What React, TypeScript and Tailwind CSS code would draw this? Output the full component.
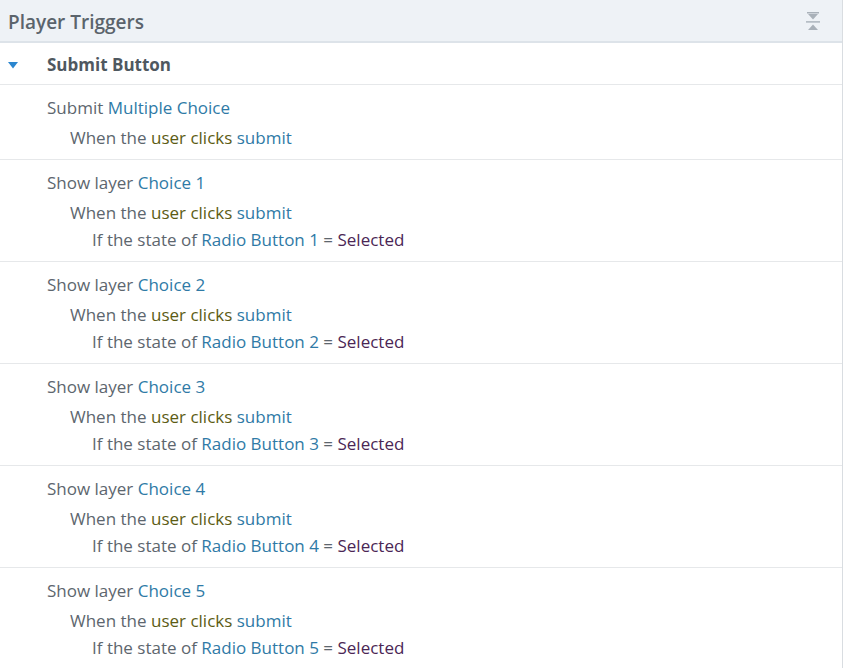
import React from "react";

const FONT = { fontFamily: '"Open Sans", "Noto Sans", sans-serif' };

type Trigger = {
  action: string;
  target: string;
  condition?: string;
};

const TRIGGERS: Trigger[] = [
  { action: "Submit", target: "Multiple Choice" },
  { action: "Show layer", target: "Choice 1", condition: "Radio Button 1" },
  { action: "Show layer", target: "Choice 2", condition: "Radio Button 2" },
  { action: "Show layer", target: "Choice 3", condition: "Radio Button 3" },
  { action: "Show layer", target: "Choice 4", condition: "Radio Button 4" },
  { action: "Show layer", target: "Choice 5", condition: "Radio Button 5" },
];

const CollapseIcon = () => (
  <svg width="14" height="20" viewBox="0 0 14 20" fill="#a9b1b9">
    <rect x="1" y="0" width="12" height="1.5" />
    <polygon points="2,2 12,2 7,7.5" />
    <rect x="0" y="9.2" width="14" height="1.4" />
    <polygon points="7,12.5 12,18 2,18" />
  </svg>
);

const TriggerRow = ({ t }: { t: Trigger }) => (
  <div className="border-b border-[#e6e8ea] pt-3 pb-[10px] text-[17px] text-[#5d666e]">
    <div className="h-[22px] leading-[22px] pl-[47px]">
      {t.action} <span className="text-[#2f7aa6]">{t.target}</span>
    </div>
    <div className="h-[22px] leading-[22px] pl-[70px] mt-2">
      When the <span className="text-[#5c5c14]">user clicks</span>{" "}
      <span className="text-[#2f7aa6]">submit</span>
    </div>
    {t.condition && (
      <div className="h-[22px] leading-[22px] pl-[92px] mt-[5px]">
        If the state of <span className="text-[#2f7aa6]">{t.condition}</span>{" "}
        = <span className="text-[#4b2655]">Selected</span>
      </div>
    )}
  </div>
);

export default function App() {
  return (
    <div className="w-[845px] h-[668px] overflow-hidden bg-white" style={FONT}>
      <div className="w-[843px] h-full border-r border-[#d9dde1] flex flex-col">
        <div className="h-[43px] shrink-0 bg-[#eef2f6] border-b-2 border-[#dde3e9] flex items-center justify-between pl-2 pr-[22px] pt-[3px]">
          <span className="text-[19px] font-semibold text-[#5b646c]">Player Triggers</span>
          <CollapseIcon />
        </div>
        <div className="h-[42px] shrink-0 border-b border-[#e6e8ea] flex items-center pt-[3px]">
          <svg width="10" height="7" viewBox="0 0 10 7" className="ml-2 mr-[29px]">
            <polygon points="0,0 10,0 5,6.5" fill="#2b86cf" />
          </svg>
          <span className="text-[17px] font-bold text-[#4f5860]">Submit Button</span>
        </div>
        {TRIGGERS.map((t, i) => (
          <TriggerRow key={i} t={t} />
        ))}
      </div>
    </div>
  );
}
